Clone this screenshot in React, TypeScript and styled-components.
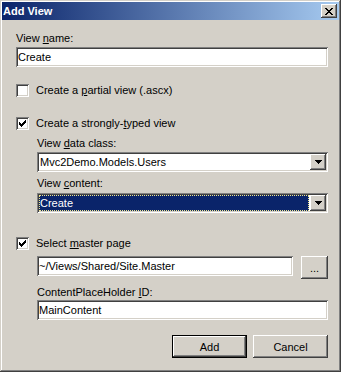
import React from "react";
import styled, { createGlobalStyle, css } from "styled-components";

const GlobalStyle = createGlobalStyle`
  html, body {
    margin: 0;
    padding: 0;
    background: #d4d0c8;
  }
  body {
    font-family: "Liberation Sans", Arial, sans-serif;
    font-size: 11px;
    color: #000;
  }
`;

const raised = css`
  box-shadow: inset -1px -1px #404040, inset 1px 1px #fff,
    inset -2px -2px #808080, inset 2px 2px #d4d0c8;
`;

const sunken = css`
  box-shadow: inset 1px 1px #808080, inset -1px -1px #fff,
    inset 2px 2px #404040, inset -2px -2px #d4d0c8;
`;

const Window = styled.div`
  box-sizing: border-box;
  width: 341px;
  height: 372px;
  padding: 2px;
  background: #d4d0c8;
  display: flex;
  flex-direction: column;
  box-shadow: inset -1px -1px #404040, inset 1px 1px #d4d0c8,
    inset -2px -2px #808080, inset 2px 2px #fff;
`;

const TitleBar = styled.div`
  height: 18px;
  display: flex;
  align-items: center;
  justify-content: space-between;
  padding: 0 2px 0 1px;
  background: linear-gradient(to right, #0a246a, #a6caf0);
`;

const TitleText = styled.span`
  color: #fff;
  font-weight: bold;
  font-size: 11px;
  line-height: 13px;
`;

const CloseButton = styled.div`
  width: 16px;
  height: 14px;
  background: #d4d0c8;
  display: flex;
  align-items: center;
  justify-content: center;
  ${raised}
`;

const Content = styled.div`
  display: flex;
  flex-direction: column;
  padding: 0 11px 0 14px;
`;

const Indent = styled.div`
  display: flex;
  flex-direction: column;
  padding-left: 21px;
`;

const Label = styled.div<{ $mt: number }>`
  line-height: 13px;
  margin-top: ${(p) => p.$mt}px;
  white-space: nowrap;
`;

const TextField = styled.input<{ $mt?: number }>`
  box-sizing: border-box;
  height: 20px;
  width: 100%;
  margin: ${(p) => p.$mt ?? 0}px 0 0 0;
  padding: 0 2px;
  border: 0;
  outline: none;
  background: #fff;
  font: 11px "Liberation Sans", Arial, sans-serif;
  color: #000;
  ${sunken}
`;

const Combo = styled.div<{ $mt: number }>`
  box-sizing: border-box;
  height: 20px;
  margin-top: ${(p) => p.$mt}px;
  padding: 2px;
  display: flex;
  background: #fff;
  ${sunken}
`;

const ComboValue = styled.div<{ $selected?: boolean }>`
  flex: 1;
  line-height: 16px;
  padding-left: 1px;
  margin-right: 1px;
  white-space: nowrap;
  ${(p) =>
    p.$selected &&
    css`
      background: #0a246a;
      color: #fff;
      outline: 1px dotted #f0e68c;
      outline-offset: -1px;
    `}
`;

const DropButton = styled.div`
  width: 16px;
  height: 16px;
  background: #d4d0c8;
  display: flex;
  align-items: center;
  justify-content: center;
  ${raised}
`;

const CheckRow = styled.label<{ $mt: number }>`
  display: flex;
  align-items: center;
  gap: 7px;
  height: 13px;
  line-height: 13px;
  margin-top: ${(p) => p.$mt}px;
  white-space: nowrap;
`;

const CheckBox = styled.div`
  box-sizing: border-box;
  width: 13px;
  height: 13px;
  padding: 3px;
  background: #fff;
  display: flex;
  ${sunken}
`;

const PathRow = styled.div`
  display: flex;
  align-items: flex-start;
  gap: 8px;
  margin-top: 6px;
`;

const Button = styled.button<{ $default?: boolean; $w: number }>`
  box-sizing: border-box;
  width: ${(p) => p.$w}px;
  height: 23px;
  flex: none;
  padding: 0;
  border: 0;
  background: #d4d0c8;
  font: 11px "Liberation Sans", Arial, sans-serif;
  color: #000;
  ${raised}
  ${(p) =>
    p.$default &&
    css`
      border: 1px solid #000;
      box-shadow: inset -1px -1px #404040, inset 1px 1px #fff,
        inset -2px -2px #808080;
    `}
`;

const ButtonRow = styled.div`
  display: flex;
  justify-content: flex-end;
  gap: 6px;
  margin-top: 15px;
`;

const CloseGlyph = () => (
  <svg width="8" height="7" viewBox="0 0 8 7" shapeRendering="crispEdges">
    <path
      d="M0 0h2v1h-2z M6 0h2v1h-2z M1 1h2v1h-2z M5 1h2v1h-2z M2 2h4v1h-4z M3 3h2v1h-2z M2 4h4v1h-4z M1 5h2v1h-2z M5 5h2v1h-2z M0 6h2v1h-2z M6 6h2v1h-2z"
      fill="#000"
    />
  </svg>
);

const ArrowGlyph = () => (
  <svg width="7" height="4" viewBox="0 0 7 4" shapeRendering="crispEdges">
    <path d="M0 0h7v1h-7z M1 1h5v1h-5z M2 2h3v1h-3z M3 3h1v1h-1z" fill="#000" />
  </svg>
);

const CheckGlyph = () => (
  <svg width="7" height="7" viewBox="0 0 7 7" shapeRendering="crispEdges">
    <path
      d="M6 0h1v1h-1z M5 1h2v1h-2z M0 2h1v1h-1z M4 2h3v1h-3z M0 3h2v1h-2z M3 3h3v1h-3z M0 4h5v1h-5z M1 5h3v1h-3z M2 6h1v1h-1z"
      fill="#000"
    />
  </svg>
);

function Check({ checked, mt, children }: { checked: boolean; mt: number; children: React.ReactNode }) {
  return (
    <CheckRow $mt={mt}>
      <CheckBox>{checked && <CheckGlyph />}</CheckBox>
      <span>{children}</span>
    </CheckRow>
  );
}

export default function App() {
  return (
    <>
      <GlobalStyle />
      <Window>
        <TitleBar>
          <TitleText>Add View</TitleText>
          <CloseButton>
            <CloseGlyph />
          </CloseButton>
        </TitleBar>
        <Content>
          <Label $mt={12}>
            View <u>n</u>ame:
          </Label>
          <TextField $mt={2} defaultValue="Create" readOnly />

          <Check checked={false} mt={17}>
            Create a <u>p</u>artial view (.ascx)
          </Check>
          <Check checked mt={20}>
            Create a strongly-<u>t</u>yped view
          </Check>
          <Indent>
            <Label $mt={7}>
              View <u>d</u>ata class:
            </Label>
            <Combo $mt={2}>
              <ComboValue>Mvc2Demo.Models.Users</ComboValue>
              <DropButton>
                <ArrowGlyph />
              </DropButton>
            </Combo>
            <Label $mt={5}>
              View <u>c</u>ontent:
            </Label>
            <Combo $mt={3}>
              <ComboValue $selected>Create</ComboValue>
              <DropButton>
                <ArrowGlyph />
              </DropButton>
            </Combo>
          </Indent>

          <Check checked mt={24}>
            Select <u>m</u>aster page
          </Check>
          <Indent>
            <PathRow>
              <TextField defaultValue="~/Views/Shared/Site.Master" readOnly />
              <Button $w={27}>...</Button>
            </PathRow>
            <Label $mt={7}>
              ContentPlaceHolder <u>I</u>D:
            </Label>
            <TextField $mt={1} defaultValue="MainContent" readOnly />
          </Indent>

          <ButtonRow>
            <Button $default $w={75}>
              Add
            </Button>
            <Button $w={75}>Cancel</Button>
          </ButtonRow>
        </Content>
      </Window>
    </>
  );
}
